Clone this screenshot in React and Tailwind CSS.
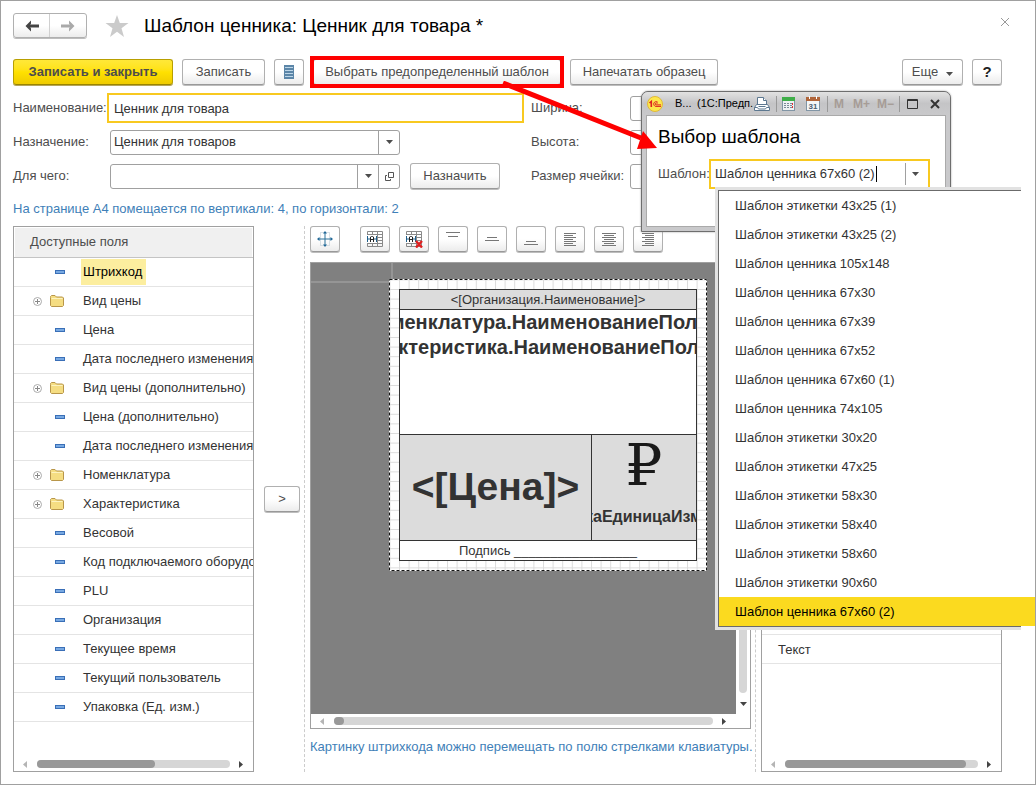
import clsx from "clsx";

const fields = [
  { name: "Штрихкод", selected: true },
  { name: "Вид цены", folder: true },
  { name: "Цена" },
  { name: "Дата последнего изменения цены" },
  { name: "Вид цены (дополнительно)", folder: true },
  { name: "Цена (дополнительно)" },
  { name: "Дата последнего изменения цены" },
  { name: "Номенклатура", folder: true },
  { name: "Характеристика", folder: true },
  { name: "Весовой" },
  { name: "Код подключаемого оборудования" },
  { name: "PLU" },
  { name: "Организация" },
  { name: "Текущее время" },
  { name: "Текущий пользователь" },
  { name: "Упаковка (Ед. изм.)" },
];

const templates = [
  "Шаблон этикетки 43x25 (1)",
  "Шаблон этикетки 43x25 (2)",
  "Шаблон ценника 105x148",
  "Шаблон ценника 67x30",
  "Шаблон ценника 67x39",
  "Шаблон ценника 67x52",
  "Шаблон ценника 67x60 (1)",
  "Шаблон ценника 74x105",
  "Шаблон этикетки 30x20",
  "Шаблон этикетки 47x25",
  "Шаблон этикетки 58x30",
  "Шаблон этикетки 58x40",
  "Шаблон этикетки 58x60",
  "Шаблон этикетки 90x60",
  "Шаблон ценника 67x60 (2)",
];

// path data for the alignment icons, one horizontal stroke after another
const alignIcons = [
  { label: "По верху", d: "M4 5.500h14M6 9.500h10" },
  { label: "По середине", d: "M6 10.500h10M4 13.500h14" },
  { label: "По низу", d: "M6 14.500h10M4 17.500h14" },
  { label: "Влево", d: "M5 6.500h12M5 8.500h9M5 10.500h12M5 12.500h9M5 14.500h12M5 16.500h9M5 18.500h12" },
  { label: "По центру", d: "M4 6.500h14M6 8.500h10M4 10.500h14M6 12.500h10M4 14.500h14M6 16.500h10M4 18.500h14" },
  { label: "Вправо", d: "M5 6.500h12M8 8.500h9M5 10.500h12M8 12.500h9M5 14.500h12M8 16.500h9M5 18.500h12" },
];

function Button({ className, children, ...props }) {
  return (
    <button
      type="button"
      className={clsx(
        "flex shrink-0 items-center justify-center rounded-[3px] border border-[#b0b0b0] border-b-[#999] bg-gradient-to-b from-white from-50% to-[#ececec] shadow-[0_1px_0_#bdbdbd] whitespace-nowrap",
        className
      )}
      {...props}
    >
      {children}
    </button>
  );
}

function Triangle({ dir = "down", className }) {
  const points = {
    down: "0,1 7,1 3.5,5",
    left: "5,0 5,7 1,3.5",
    right: "1,0 1,7 5,3.5",
  };
  return (
    <svg width="7" height="7" className={clsx("shrink-0 fill-current", className)}>
      <polygon points={points[dir]} />
    </svg>
  );
}

function HScroll({ thumb, className }) {
  return (
    <div className={clsx("flex shrink-0 items-center gap-2 px-2", className)}>
      <Triangle dir="left" className="text-[#b5b5b5]" />
      <div className="h-2 flex-1 rounded-full bg-[#d6d6d6]">
        <div className={clsx("h-2 rounded-full bg-[#999]", thumb)} />
      </div>
      <Triangle dir="right" className="text-[#444]" />
    </div>
  );
}

function Header() {
  return (
    <header className="flex h-[25px] items-center">
      <div className="flex h-[25px] rounded-[3px] border border-[#b0b0b0] bg-gradient-to-b from-white from-50% to-[#ececec] shadow-[0_1px_0_#bdbdbd]">
        <button type="button" aria-label="Назад" className="grid w-9 place-items-center border-r border-[#d0d0d0]">
          <svg width="14" height="12" className="fill-[#444] stroke-[#444]">
            <path d="M14 6H4" strokeWidth="3" />
            <path d="M6 .5v3L4.500 6 6 8.500v3L.5 6z" stroke="none" />
          </svg>
        </button>
        <button type="button" aria-label="Вперед" className="grid w-9 place-items-center">
          <svg width="14" height="12" className="fill-[#a9a9a9] stroke-[#a9a9a9]">
            <path d="M0 6h10" strokeWidth="3" />
            <path d="M8 .5v3L9.500 6 8 8.500v3L13.500 6z" stroke="none" />
          </svg>
        </button>
      </div>
      <button type="button" aria-label="В избранное" className="ml-[18px]">
        <svg width="24" height="24" viewBox="0 0 24 24" className="fill-[#cbcbcb]">
          <path d="M12 1l2.800 8H23.500l-7 5.200L19 23l-7-5.200L5 23l2.500-8.800L0.500 9h8.700z" />
        </svg>
      </button>
      <h1 className="ml-[15px] text-[19px] leading-6 text-black">Шаблон ценника: Ценник для товара *</h1>
      <button type="button" aria-label="Закрыть" className="-mr-2 mb-2 ml-auto">
        <svg width="10" height="10" className="stroke-[#999]">
          <path d="M1 1l8 8M9 1l-8 8" />
        </svg>
      </button>
    </header>
  );
}

function CommandBar() {
  return (
    <div className="mt-[21px] flex items-start gap-[9px]">
      <button
        type="button"
        className="h-[26px] w-40 rounded-[3px] border border-[#b89f00] border-b-[#9a8500] bg-gradient-to-b from-[#ffe838] via-[#ffe100] to-[#efcb00] font-bold text-[#4d4d4d] shadow-[0_1px_0_#b5a55a]"
      >
        Записать и закрыть
      </button>
      <Button className="h-[26px] w-[83px]">Записать</Button>
      <Button className="h-[26px] w-[30px]" aria-label="Список">
        <svg width="10" height="14">
          <rect width="10" height="14" fill="#5c86a8" />
          <path d="M1 2.500h8M1 5.500h8M1 8.500h8M1 11.500h8" stroke="#bdd6e8" />
        </svg>
      </Button>
      <div className="outline-4 outline-offset-[-1px] outline-[#fe0000]">
        <Button className="h-[26px] w-[248px]">Выбрать предопределенный шаблон</Button>
      </div>
      <Button className="h-[26px] w-[148px]">Напечатать образец</Button>
      <Button className="ml-auto h-[26px] w-[61px] gap-2">
        Еще
        <Triangle className="mt-1" />
      </Button>
      <Button className="h-[26px] w-[30px] text-[15px] font-bold text-[#222]">?</Button>
    </div>
  );
}

function Form() {
  const box = "flex h-[25px] w-[290px] overflow-hidden rounded-[3px] border border-[#a0a0a0] bg-white";
  return (
    <div className="mt-[6px] flex">
      <div className="w-[518px]">
        <div className="flex h-[34px] items-center">
          <label htmlFor="name" className="w-[94px] shrink-0">Наименование:</label>
          <input
            id="name"
            defaultValue="Ценник для товара"
            className="h-[30px] w-[417px] border-2 border-[#f8c920] px-[5px] text-[#333] outline-none"
          />
        </div>
        <div className="flex h-[34px] items-center">
          <label htmlFor="purpose" className="w-[97px] shrink-0">Назначение:</label>
          <div className={box}>
            <select id="purpose" className="min-w-0 flex-1 appearance-none px-[3px] text-[#333] outline-none">
              <option>Ценник для товаров</option>
            </select>
            <span className="grid w-[21px] place-items-center border-l border-[#a0a0a0]">
              <Triangle />
            </span>
          </div>
        </div>
        <div className="flex h-[34px] items-center">
          <label htmlFor="target" className="w-[97px] shrink-0">Для чего:</label>
          <div className={box}>
            <input id="target" className="min-w-0 flex-1 px-[3px] outline-none" />
            <button type="button" aria-label="Выбрать" className="grid w-[21px] place-items-center border-l border-[#a0a0a0]">
              <Triangle />
            </button>
            <button type="button" aria-label="Открыть" className="grid w-[21px] place-items-center border-l border-[#a0a0a0]">
              <svg width="9" height="9" className="fill-none stroke-[#555]">
                <path d="M3.500 0.500h5v5h-5zM2 3.500h-1.500v5h5v-1.500" />
              </svg>
            </button>
          </div>
          <Button className="ml-[10px] h-[26px] w-[90px]">Назначить</Button>
        </div>
      </div>
      <div>
        {["Ширина:", "Высота:", "Размер ячейки:"].map((label, i) => (
          <div key={label} className="flex h-[34px] items-center">
            <label htmlFor={`size-${i}`} className="w-[99px] shrink-0 whitespace-nowrap">{label}</label>
            <input
              id={`size-${i}`}
              className="h-[25px] w-20 rounded-[3px] border border-[#a0a0a0] px-1 outline-none"
            />
          </div>
        ))}
      </div>
    </div>
  );
}

function FieldIcon({ folder }) {
  if (folder) {
    return (
      <svg width="14" height="12" viewBox="0 0 14 12">
        <path d="M.5 2.500V1.500l1-1H5l1.500 1.500h6l1 1v7.500l-1 1h-11l-1-1z" fill="#f5dd82" stroke="#b8964a" />
        <path d="M1.500 3.500h11" stroke="#fdf3bf" />
      </svg>
    );
  }
  return (
    <svg width="10" height="4">
      <rect x="0.500" y="0.500" width="9" height="3" fill="#78a9e2" stroke="#3a6fb7" />
    </svg>
  );
}

function AvailableFields() {
  return (
    <section className="flex w-[241px] shrink-0 flex-col border border-[#a0a0a0] bg-white">
      <h2 className="mx-px mt-px h-[29px] bg-[#f0f0f0] pl-[15px] leading-[28px]">Доступные поля</h2>
      <ul className="flex-1 overflow-hidden border-t border-[#c4c4c4] text-[#333]">
        {fields.map((field, i) => (
          <li key={i} className="flex h-[29px] items-center border-b border-[#e4e4e4]">
            <span className="flex w-[30px] shrink-0 justify-end pr-[2px]">
              {field.folder && (
                <svg width="9" height="9" className="fill-none stroke-[#888]">
                  <circle cx="4.500" cy="4.500" r="4" stroke="#aaa" />
                  <path d="M2 4.500h5M4.500 2v5" />
                </svg>
              )}
            </span>
            <span className={clsx("grid w-8 shrink-0 place-items-center", field.folder && "pr-[6px]")}>
              <FieldIcon folder={field.folder} />
            </span>
            <span
              className={clsx(
                "ml-[5px] px-[2px] leading-[26px] whitespace-nowrap",
                field.selected && "bg-[#fcee9f] pr-1 text-black"
              )}
            >
              {field.name}
            </span>
          </li>
        ))}
      </ul>
      <HScroll className="h-[14px]" thumb="w-[61%]" />
    </section>
  );
}

function CellIcon({ remove }) {
  return (
    <svg width="18" height="17" className="fill-none">
      <path
        d="M1.500.5h15v15h-15zM1.500 3.500h15M10.500 6.500h6M10.500 9.500h6M1.500 12.500h15M11.500.5v15M6.500.5v3M6.500 12.500v3"
        stroke="#8a8a8a"
      />
      <rect x="1" y="4" width="10" height="8" fill="#fff" />
      <path d="M1.500 5v6M10.500 5v6M2 8h2M8 8h2" stroke="#1f5f8b" />
      <path d="M4.500 11V6l1-.5h1l1 .5v5M4.500 8.500h3" stroke="#222" />
      {remove && <path d="M11 10l6 6.500M17 10l-6 6.500" stroke="#e02020" strokeWidth="2.400" />}
    </svg>
  );
}

function Toolbar() {
  return (
    <div className="flex h-[27px] gap-[9px]">
      <Button className="mr-[11px] h-[26px] w-[30px]" aria-label="Переместить">
        <svg width="16" height="16" viewBox="0 0 16 16" className="fill-none">
          <rect x="3.500" y="1.500" width="9" height="13" stroke="#b4c4cf" strokeDasharray="1 1" />
          <path d="M8 1v14M1 8h14" stroke="#2b7099" />
          <path d="M8 0l2 2.500H6zM8 16l2-2.500H6zM0 8l2.500-2v4zM16 8l-2.500-2v4z" fill="#1f6796" />
        </svg>
      </Button>
      <Button className="h-[26px] w-[30px]" aria-label="Объединить ячейки">
        <CellIcon />
      </Button>
      <Button className="h-[26px] w-[30px]" aria-label="Разъединить ячейки">
        <CellIcon remove />
      </Button>
      {alignIcons.map(({ label, d }) => (
        <Button key={label} className="h-[26px] w-[30px]" aria-label={label}>
          <svg width="22" height="24" className="stroke-[#777]">
            <path d={d} />
          </svg>
        </Button>
      ))}
    </div>
  );
}

function PriceTag() {
  return (
    <div className="absolute top-4 left-[78px] h-[292px] w-[318px] bg-white p-[10px]">
      <svg className="absolute inset-0 h-full w-full">
        <defs>
          <pattern id="cells" x="10" y="10" width="9.600" height="9.600" patternUnits="userSpaceOnUse">
            <path d="M.5 0v9.600M0 .5h9.600" stroke="#dcdcdc" />
          </pattern>
        </defs>
        <rect width="100%" height="100%" fill="url(#cells)" />
        <rect x="0.500" y="0.500" width="317" height="291" fill="none" stroke="#fff" />
        <rect x="0.500" y="0.500" width="317" height="291" fill="none" stroke="#111" strokeDasharray="3 2" />
      </svg>
      <div className="relative flex h-full flex-col border border-[#333] bg-white text-[#333]">
        <div className="h-5 border-b border-[#333] bg-[#dcdcdc] text-center leading-[20px]">
          &lt;[Организация.Наименование]&gt;
        </div>
        <div className="flex flex-1 flex-col items-center overflow-hidden text-[20px] leading-[25px] font-bold whitespace-nowrap">
          <span>&lt;[Номенклатура.НаименованиеПолное]&gt;</span>
          <span>&lt;[Характеристика.НаименованиеПолное]&gt;&nbsp;&nbsp;</span>
        </div>
        <div className="flex h-[107px] border-y border-[#333] bg-[#dcdcdc] font-bold">
          <div className="grid flex-1 place-items-center border-r border-[#333] text-[39px]">&lt;[Цена]&gt;</div>
          <div className="flex w-[104px] flex-col items-center overflow-hidden">
            <span className="mt-[2px] font-['DejaVu_Serif',serif] text-[58px] leading-[56px] font-normal text-[#1a1a1a]">₽</span>
            <span className="mt-[14px] text-[16px] leading-5 whitespace-nowrap">&lt;[УпаковкаЕдиницаИзмерения]&gt;</span>
          </div>
        </div>
        <div className="h-[19px] text-center leading-[19px]">Подпись _________________</div>
      </div>
    </div>
  );
}

function Canvas() {
  return (
    <div className="mt-[9px] flex flex-1 flex-col border border-[#a0a0a0]">
      <div className="flex flex-1">
        <div className="relative flex-1 overflow-hidden bg-[#808080]">
          <div className="h-[20px] w-[82px] border-b-2 border-[#959595]">
            <div className="h-[18px] border-r-2 border-[#959595]" />
          </div>
          <PriceTag />
        </div>
        <div className="flex w-[14px] flex-col items-center gap-2 pt-2 pb-[6px]">
          <div className="w-2 flex-1 rounded-full bg-[#d6d6d6]" />
          <Triangle className="text-[#444]" />
        </div>
      </div>
      <HScroll className="mr-[14px] h-[14px]" thumb="w-[10px]" />
    </div>
  );
}

function TemplateFields() {
  return (
    <section className="flex w-[241px] shrink-0 flex-col border border-[#a0a0a0] bg-white">
      <div className="mx-px mt-px h-[29px] bg-[#f0f0f0]" />
      <ul className="flex-1 border-t border-[#c4c4c4] text-[#333]">
        {templates.slice(2).map((name) => (
          <li key={name} className="h-[29px] border-b border-[#e4e4e4]" />
        ))}
        <li className="h-[29px] border-b border-[#e4e4e4] pl-4 leading-[29px]">Текст</li>
      </ul>
      <HScroll className="h-[14px]" thumb="w-[94%]" />
    </section>
  );
}

function DialogTitle() {
  return (
    <div className="flex h-[23px] items-center rounded-t-[6px] bg-gradient-to-b from-[#e2e2e2] via-[#c4c4c6] to-[#c9c9cb] pl-[5px] text-[11px] whitespace-nowrap text-black">
      <svg width="16" height="16" viewBox="0 0 16 16" className="shrink-0">
        <circle cx="8" cy="8" r="7.500" fill="#fde74c" stroke="#e0b93a" />
        <path d="M2.500 7l1.800-1.500V11" fill="none" stroke="#d22" strokeWidth="1.600" />
        <path d="M10.800 6.300A2.400 2.400 0 1 0 9 10.400h5M10.300 7.600A1 1 0 1 0 9 8.900h5" fill="none" stroke="#d22" />
      </svg>
      <span className="ml-[12px] w-[16px]">В...</span>
      <span className="ml-[6px] w-[54px]">(1С:Предп.</span>
      <svg width="16" height="16" viewBox="0 0 16 16" className="ml-[3px] shrink-0 fill-white stroke-[#5d7890]">
        <path d="M3.500 8.500v-7h6l3 3v4" />
        <path d="M9.500 1.500v3h3" />
        <path d="M2.500 8.500h11l2 3v3h-15v-3z" />
        <path d="M.5 11.500h3l1 1.500h7l1-1.500h3M4.500 10.500h7" />
      </svg>
      <span className="ml-[6px] h-4 w-px shrink-0 bg-[#999]" />
      <svg width="13" height="16" viewBox="0 0 13 16" className="ml-[5px] shrink-0">
        <rect x="0.500" y="1.500" width="12" height="13" fill="#eef1f3" stroke="#8195a5" />
        <rect x="0" y="1" width="13" height="4" fill="#3fae49" />
        <path d="M2 7.500h8M2 9.500h8M2 11.500h8" stroke="#7b8b98" strokeDasharray="2 1" />
        <path d="M10.500 7v6" stroke="#e03030" strokeDasharray="2 1" />
      </svg>
      <svg width="14" height="16" viewBox="0 0 14 16" className="ml-[11px] shrink-0">
        <rect x="0.500" y="1.500" width="13" height="13" fill="#f4f6f7" stroke="#8195a5" />
        <rect x="0" y="1" width="14" height="4" fill="#b0653a" />
        <path d="M3.500 0v3M10.500 0v3" stroke="#fff" />
        <text x="7" y="13" textAnchor="middle" fontSize="8" fontWeight="bold" fill="#4a5f72">31</text>
      </svg>
      <span className="ml-[7px] h-4 w-px shrink-0 bg-[#999]" />
      <button type="button" className="ml-[6px] text-[12px] font-bold text-[#a69c96]">M</button>
      <button type="button" className="ml-[9px] text-[12px] font-bold text-[#a69c96]">M+</button>
      <button type="button" className="ml-[7px] text-[12px] font-bold text-[#a69c96]">M−</button>
      <span className="ml-[5px] h-4 w-px shrink-0 bg-[#999]" />
      <button type="button" aria-label="Развернуть" className="ml-[7px]">
        <svg width="11" height="10" className="fill-none stroke-[#333]">
          <path d="M.5.5h10v9H.5zM.5 1.500h10" />
        </svg>
      </button>
      <button type="button" aria-label="Закрыть окно" className="ml-3">
        <svg width="10" height="10" className="stroke-[#333]">
          <path d="M1 1l8 8M9 1l-8 8" strokeWidth="2" />
        </svg>
      </button>
    </div>
  );
}

function TemplateDialog() {
  return (
    <div
      role="dialog"
      aria-label="Выбор шаблона"
      className="absolute top-[90px] left-[640px] flex h-[141px] w-[310px] flex-col rounded-t-[7px] border border-[#6e6e6e] bg-[#c9c9cb] shadow-[0_0_2px_#999]"
    >
      <DialogTitle />
      <div className="mx-1 mb-1 flex-1 border border-[#aaa] bg-white px-[11px] pt-[9px]">
        <h2 className="text-[19px] leading-6 text-black">Выбор шаблона</h2>
        <div className="mt-[10px] flex h-[30px] items-center">
          <label htmlFor="template" className="w-[51px] shrink-0">Шаблон:</label>
          <div className="relative flex h-[30px] w-[221px] shrink-0 items-stretch border-2 border-[#f8c920] bg-white">
            <input
              id="template"
              defaultValue="Шаблон ценника 67x60 (2)"
              className="w-[165px] pl-1 text-[#333] outline-none"
            />
            <span className="my-[5px] w-px bg-black" />
            <button type="button" aria-label="Показать список" className="my-[2px] ml-auto grid w-[23px] place-items-center border-l border-[#a0a0a0] pr-1">
              <Triangle />
            </button>
            <TemplateList />
          </div>
        </div>
      </div>
    </div>
  );
}

function TemplateList() {
  return (
    <div className="absolute top-[26px] left-[4px] w-[306px] border-y-[3px] border-l-[3px] border-[#e2e2e2]">
      <ul role="listbox" aria-label="Шаблоны" className="border-y border-l border-[#6b6b6b] bg-white text-[#333]">
        {templates.map((name, i) => {
          const selected = i === templates.length - 1;
          return (
            <li
              key={name}
              role="option"
              aria-selected={selected}
              className={clsx("h-[29px] pl-4 leading-[29px]", selected && "-mr-[15px] bg-[#fbda1f] text-black")}
            >
              {name}
            </li>
          );
        })}
      </ul>
    </div>
  );
}

export default function App() {
  return (
    <div className="relative flex min-h-screen flex-col overflow-hidden border border-[#a0a0a0] bg-white pt-3 pr-[33px] pb-3 pl-3 font-['Liberation_Sans',Arial,sans-serif] text-[13px] text-[#4d4d4d]">
      <Header />
      <CommandBar />
      <Form />
      <p className="h-[33px] leading-[31px] text-[#3f7fb8]">
        На странице А4 помещается по вертикали: 4, по горизонтали: 2
      </p>
      <main className="flex flex-1">
        <AvailableFields />
        <div className="flex w-[51px] shrink-0 items-center border-r border-dashed border-[#ccc] pl-[10px]">
          <Button className="h-[26px] w-9">&gt;</Button>
        </div>
        <div className="flex min-w-0 flex-1 flex-col pr-[4px] pl-[5px]">
          <Toolbar />
          <Canvas />
          <p className="h-[43px] leading-[36px] whitespace-nowrap text-[#3f7fb8]">
            Картинку штрихкода можно перемещать по полю стрелками клавиатуры.
          </p>
        </div>
        <div className="w-[6px] shrink-0 border-l border-dashed border-[#ccc]" />
        <TemplateFields />
      </main>
      <TemplateDialog />
      {/* pointer from the command to the window it opens */}
      <svg width="156" height="70" className="pointer-events-none absolute top-[80px] left-[501px] fill-[#fe0000]">
        <path d="M1 2L139 57" stroke="#fe0000" strokeWidth="5" />
        <polygon points="155,67 135,68 141,50" />
      </svg>
    </div>
  );
}
